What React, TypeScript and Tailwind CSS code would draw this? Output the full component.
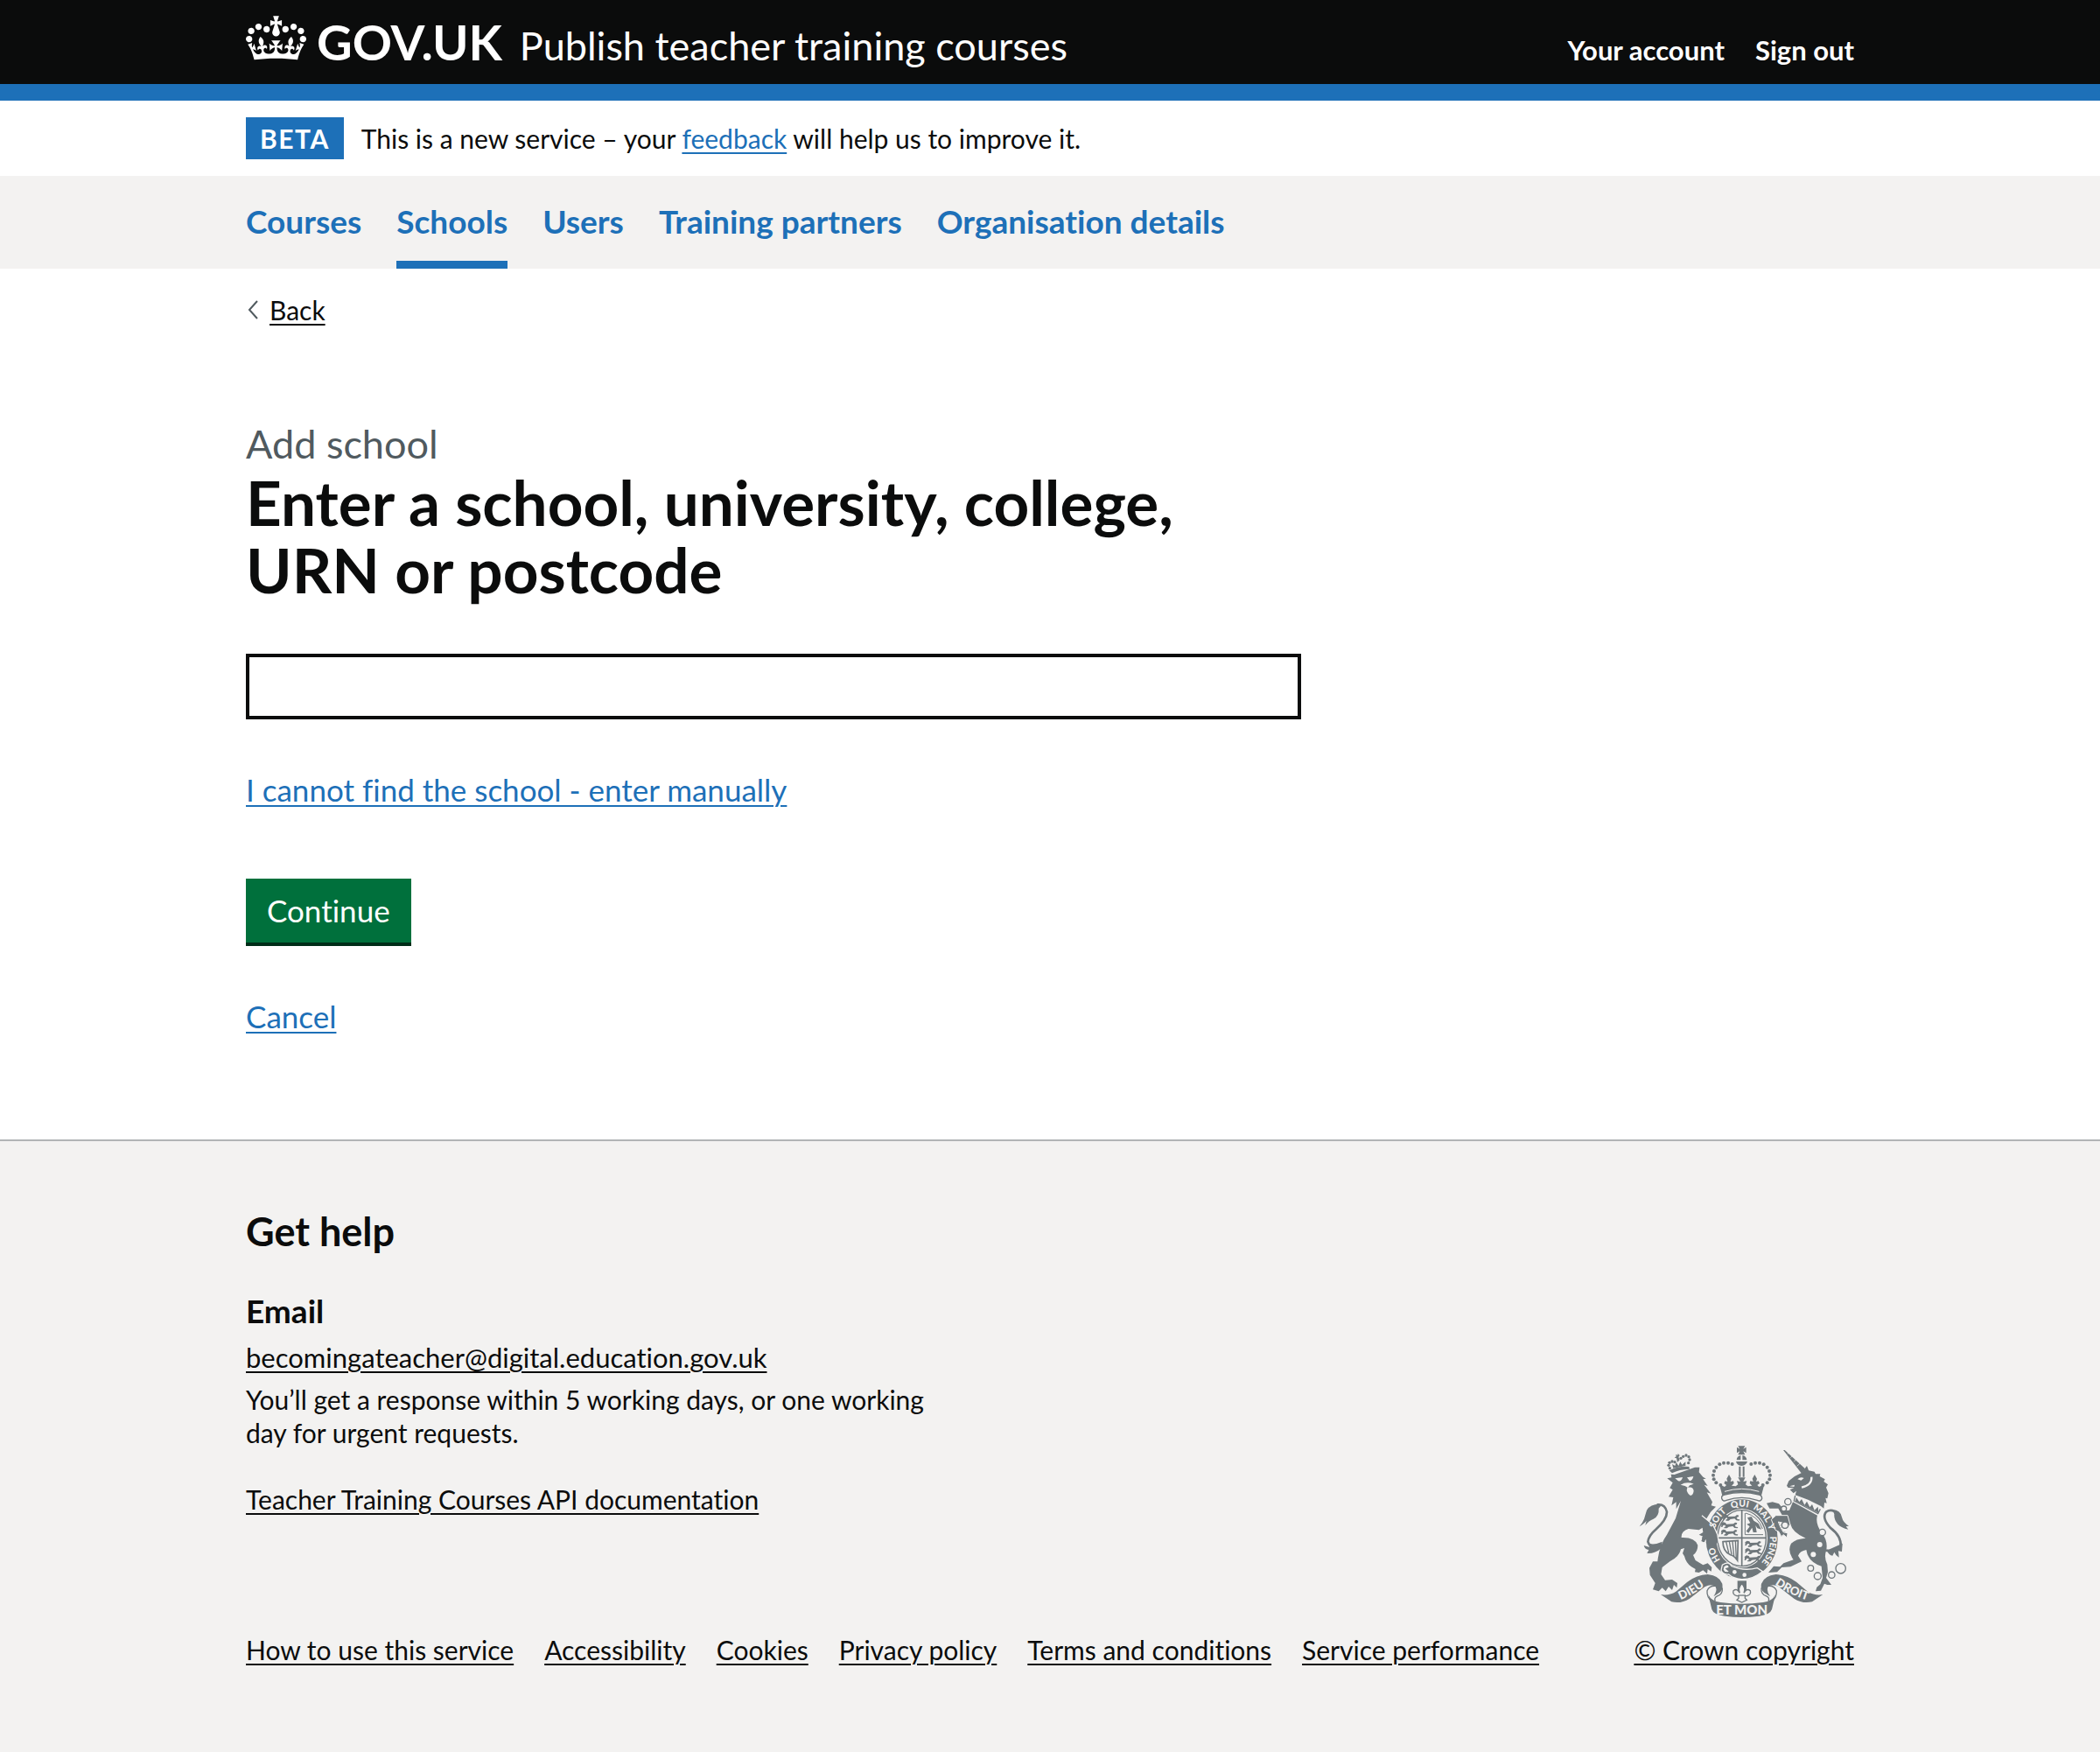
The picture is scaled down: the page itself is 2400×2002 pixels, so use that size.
import type { ReactNode } from "react";

const container = "mx-auto w-full max-w-[1838px]";
const link =
  "underline decoration-2 underline-offset-4 [font-variant-ligatures:no-common-ligatures]";

const navItems = [
  { label: "Courses", current: false },
  { label: "Schools", current: true },
  { label: "Users", current: false },
  { label: "Training partners", current: false },
  { label: "Organisation details", current: false },
];

const footerLinks = [
  "How to use this service",
  "Accessibility",
  "Cookies",
  "Privacy policy",
  "Terms and conditions",
  "Service performance",
];

function Crown() {
  return (
    <svg viewBox="0 0 132 97" className="-mb-1 h-[51px] w-[69px] shrink-0" fill="currentColor" aria-hidden="true">
      <path d="M25 30.2c3.5 1.5 7.7-.2 9.1-3.7 1.5-3.6-.2-7.8-3.9-9.2-3.6-1.4-7.6.3-9.1 3.9-1.4 3.5.3 7.5 3.9 9zM9 39.5c3.6 1.5 7.8-.2 9.2-3.7 1.5-3.6-.2-7.8-3.9-9.1-3.6-1.5-7.6.2-9.1 3.8-1.4 3.5.3 7.5 3.8 9zM4.4 57.2c3.5 1.5 7.7-.2 9.1-3.8 1.5-3.6-.2-7.7-3.9-9.1-3.5-1.5-7.6.3-9.1 3.8-1.4 3.5.3 7.6 3.9 9.1zm38.3-21.4c3.5 1.5 7.7-.2 9.1-3.8 1.5-3.6-.2-7.7-3.9-9.1-3.6-1.5-7.6.3-9.1 3.8-1.3 3.6.4 7.7 3.9 9.1zm64.4-5.6c-3.6 1.5-7.8-.2-9.1-3.7-1.5-3.6.2-7.8 3.8-9.2 3.6-1.4 7.7.3 9.2 3.9 1.3 3.5-.4 7.5-3.9 9zm15.9 9.3c-3.6 1.5-7.7-.2-9.1-3.7-1.5-3.6.2-7.8 3.7-9.1 3.6-1.5 7.7.2 9.2 3.8 1.5 3.5-.3 7.5-3.8 9zm4.7 17.7c-3.6 1.5-7.8-.2-9.2-3.8-1.5-3.6.2-7.7 3.9-9.1 3.6-1.5 7.7.3 9.2 3.8 1.3 3.5-.4 7.6-3.9 9.1zM89.3 35.8c-3.6 1.5-7.8-.2-9.2-3.8-1.4-3.6.2-7.7 3.9-9.1 3.6-1.5 7.7.3 9.2 3.8 1.4 3.6-.3 7.7-3.9 9.1zM69.7 17.7l8.9 4.7V9.3l-8.9 2.8c-.2-.3-.5-.6-.9-.9L72.4 0H59.6l3.5 11.2c-.3.3-.6.5-.9.9l-8.8-2.8v13.1l8.8-4.7c.3.3.6.7.9.9l-5 15.4v.1c-.2.8-.4 1.6-.4 2.4 0 4.1 3.1 7.5 7 8.1h.2c.3 0 .7.1 1 .1.4 0 .7 0 1-.1h.2c4-.6 7.1-4.1 7.1-8.1 0-.8-.1-1.7-.4-2.4V34l-5.1-15.4c.4-.2.7-.6 1-.9zM66 92.8c16.9 0 32.8 1.1 47.1 3.2 4-16.9 8.9-26.7 14-33.5l-9.6-3.4c1 4.9 1.1 7.2 0 10.2-1.5-1.4-3-4.3-4.2-8.7L108.6 76c2.8-2 5-3.2 7.5-3.3-4.4 9.4-10 11.9-13.6 11.2-4.3-.8-6.3-4.6-5.6-7.9 1-4.7 5.7-5.9 8-.5 4.3-8.7-3-11.4-7.6-8.8 7.1-7.2 7.9-13.5 2.1-21.1-8 6.1-8.1 12.3-4.5 20.8-4.7-5.4-12.1-2.5-9.5 6.2 3.4-5.2 7.9-2 7.2 3.1-.6 4.3-6.4 7.8-13.5 7.2-10.3-.9-10.9-8-11.2-13.8 2.5-.5 7.1 1.8 11 7.3L80.2 60c-4.1 4.4-8 5.3-12.3 5.4 1.4-4.4 8-11.6 8-11.6H55.5s6.4 7.2 7.9 11.6c-4.2-.1-8-1-12.3-5.4l1.4 16.4c3.9-5.5 8.5-7.7 10.9-7.3-.3 5.8-.9 12.8-11.1 13.8-7.2.6-12.9-2.9-13.5-7.2-.7-5 3.8-8.3 7.1-3.1 2.7-8.7-4.6-11.6-9.4-6.2 3.7-8.5 3.6-14.7-4.6-20.8-5.8 7.6-5 13.9 2.2 21.1-4.7-2.6-11.9.1-7.7 8.8 2.3-5.5 7.1-4.2 8.1.5.7 3.3-1.3 7.1-5.7 7.9-3.5.7-9-1.8-13.5-11.2 2.5.1 4.7 1.3 7.5 3.3l-4.7-15.4c-1.2 4.4-2.7 7.2-4.3 8.7-1.1-3-.9-5.3 0-10.2l-9.5 3.4c5 6.9 9.9 16.7 14 33.5 14.8-2.1 30.8-3.2 47.7-3.2z" />
    </svg>
  );
}

const INK = "#6f777b";
const PAPER = "#f3f2f1";

/* One walking lion of the quartered shield, 64 units wide. */
function ShieldLion({ x, y }: { x: number; y: number }) {
  return (
    <path
      transform={`translate(${x} ${y})`}
      d="M2 6l7-5 8 2 3 5 24-1 6-5 7 2-2 5-6 2 3 6 8 1-2 4-10-1-6-6-14 2-6 5-10 0 1-4 5-2-3-5-6 1-2 5-5 1 1-7z"
      fill={INK}
    />
  );
}

/* One side of the scroll; the other is its mirror image. */
function Scroll() {
  return (
    <g>
      <path d="M145 579Q172 584 197 569L236 536Q268 512 306 510Q346 514 356 542Q361 566 340 577L326 586Q340 566 333 553Q318 541 296 553L244 593Q214 612 182 604Z" fill={INK} />
      <path d="M333 550Q312 548 304 566Q302 590 322 604M356 556Q358 578 340 584Q326 590 332 602" fill="none" stroke={INK} strokeWidth="4" />
    </g>
  );
}

function Crest() {
  const arch = [
    [350, 204], [335, 196], [327, 184], [325, 170], [328, 156], [335, 143], [347, 133], [361, 128], [376, 128], [390, 132],
  ];
  return (
    <svg viewBox="70 66 720 594" className="h-[198px] w-[240px]" role="img" aria-label="Royal coat of arms">
      {/* lion: tail, body, face and coronet */}
      <path d="M142 418Q106 420 101 398Q104 376 128 356Q166 322 166 296Q160 268 132 271" fill="none" stroke={INK} strokeWidth="8" />
      <path d="M150 270Q112 266 97 290Q92 306 88 320Q82 334 72 346Q90 334 96 326L92 342Q104 326 120 320Q140 310 138 284Z" fill={INK} />
      <path d="M150 398Q118 412 101 402L106 417L87 411Q90 424 104 426L98 438Q124 440 148 420Z" fill={INK} />
      <path
        d="M167 181L182 178L180 167L192 168L262 143L278 143L276 160L290 176L300 182L290 184L306 207L294 203L317 233L303 229L322 262L318 274L334 278L316 296L300 322L322 342L336 374L340 398L328 412L322 400L312 412L302 404L306 392L292 400L284 396L290 380L276 374L290 366L288 350L276 358L240 354Q214 362 216 384Q262 382 272 410Q272 432 256 444L264 462L290 478L306 472L320 486L318 500L306 492L304 508L290 496L276 504L262 502L264 492L250 484Q232 472 226 448L220 438L226 420L214 424Q208 450 176 466L150 486L146 510L160 530L184 528L202 540L200 556L190 546L184 564L172 552L162 568L150 556L138 568L118 562L126 540L108 512L106 488L118 466L134 466Q140 410 166 374L196 318L214 258L198 286L198 262L182 274L188 246L172 244L186 220L176 214L186 196Z"
        fill={INK}
      />
      <path d="M194 181L220 177Q216 193 205 190ZM235 178L257 174Q254 189 244 190ZM213 203Q234 190 258 200L244 205L238 213L228 207ZM236 213Q256 208 258 224Q256 238 247 240Q238 236 234 222Z" fill={PAPER} />
      <path d="M174 154Q206 138 242 141L244 149Q208 150 184 163Z" fill={INK} />
      <path d="M188 146L184 132L194 138L198 126L206 138L212 124L218 134L230 124L230 138Z" fill={INK} />
      {[[176, 146], [172, 136], [175, 127], [184, 123], [193, 125], [214, 112], [222, 106], [232, 102], [241, 107], [244, 117], [240, 128]].map(([x, y]) => (
        <circle key={`${x}-${y}`} cx={x} cy={y} r="5" fill={INK} />
      ))}
      <path d="M197 98L203 102L204 96L210 102L206 108L210 118L202 126L199 112L192 110L198 106Z" fill={INK} />

      {/* unicorn: horn, head, collar, body and tail */}
      <path d="M565 84L570 84L640 148L628 164Z" fill={INK} />
      <path d="M584 92L580 98M596 104L590 110M609 116L602 124M622 130L612 139" stroke={PAPER} strokeWidth="2" />
      <path
        d="M577 206L584 190L604 174L628 162L646 138L652 154L672 158L676 166L692 166L690 174L708 184L704 192L718 202L712 212L720 232L716 250L710 248L714 266L706 264L704 284L694 276L650 254L606 238L610 224L600 232L588 220L602 214L582 213Z"
        fill={INK}
      />
      <path d="M662 176Q664 204 628 212" fill="none" stroke={PAPER} strokeWidth="7" />
      <path d="M614 184Q624 174 636 180L626 188ZM586 208L604 203L602 210Z" fill={PAPER} />
      <path d="M606 240L602 258L684 302L692 286" fill={PAPER} stroke={INK} strokeWidth="4" />
      <path d="M606 259L610 246L620 262L628 252L638 272L646 260L656 280L664 270L672 290L684 278L686 300Z" fill={INK} />
      <path
        d="M598 262L682 308Q674 334 696 366Q720 396 712 430Q704 452 716 476L718 502L712 522L730 546L716 546L706 542L694 566L676 568L680 554L692 544L700 522L696 482Q650 468 644 426Q622 430 616 446L628 466L590 484L560 486L544 502L514 504L532 482L554 484L566 472L600 460Q578 430 592 404Q608 388 642 386Q596 366 590 338L566 328L548 326L554 342L564 362L580 368L578 384L566 374L558 380L552 364L540 358L528 322L540 312L574 310L562 308L548 284L518 284L508 266L528 262L550 268L570 292L586 290Z"
        fill={INK}
      />
      <path d="M712 428Q750 436 762 416Q766 380 726 350Q696 316 712 296Q734 282 752 306" fill="none" stroke={INK} strokeWidth="8" />
      <path d="M734 288Q762 290 766 314Q770 332 790 344L780 346L788 356Q764 350 752 338Q738 322 740 304Z" fill={INK} />
      <path d="M768 404L766 432L754 430L756 452Q744 444 740 434L734 446Q722 444 714 428Z" fill={INK} />
      {[[581, 261, 11], [567, 285, 9], [571, 341, 11], [699, 366, 11], [659, 489, 10], [683, 516, 12], [731, 512, 11], [762, 490, 17]].map(([x, y, r]) => (
        <circle key={`${x}-${y}`} cx={x} cy={y} r={r} fill={PAPER} stroke={INK} strokeWidth="4" />
      ))}
      <circle cx="690" cy="408" r="9" fill={PAPER} />
      <circle cx="668" cy="442" r="9" fill={PAPER} />

      {/* garter and quartered shield */}
      <ellipse cx="423" cy="389" rx="127" ry="140" fill={PAPER} />
      <ellipse cx="423" cy="389" rx="123" ry="136" fill={INK} />
      <ellipse cx="423" cy="386" rx="88" ry="101" fill={PAPER} />
      <ellipse cx="423" cy="386" rx="83" ry="96" fill={PAPER} stroke={INK} strokeWidth="4" />
      <path d="M423 290V482M340 385H506" stroke={INK} strokeWidth="5" />
      <ShieldLion x={356} y={304} />
      <ShieldLion x={350} y={330} />
      <ShieldLion x={350} y={355} />
      <ShieldLion x={432} y={394} />
      <ShieldLion x={432} y={419} />
      <ShieldLion x={430} y={444} />
      <path d="M434 300V374H496M436 300Q478 310 494 354" fill="none" stroke={INK} strokeWidth="3" />
      <path d="M442 316L456 312L464 326L480 336L490 356L476 352L470 342L474 366L462 366L458 350L446 368L438 362L450 346L440 338L452 334Z" fill={INK} />
      <path d="M358 398L410 394L408 462Q398 446 382 442Q358 430 358 398Z" fill="none" stroke={INK} strokeWidth="5" />
      <path d="M369 398L378 436M380 397L388 442M391 396L396 448M401 396L404 456" stroke={INK} strokeWidth="4" />
      <path d="M284 306L322 340L338 374L342 398L330 412L322 402L312 412L300 402L304 388L290 398L286 384L296 370L290 350Z" fill={INK} />
      <path d="M286 308L324 340L340 374L344 402" fill="none" stroke={PAPER} strokeWidth="4" />
      <path d="M590 344L566 334L548 330L556 350L566 366L580 368L578 384L566 374L558 380L550 364L538 358L524 322L540 308L580 308Z" fill={INK} stroke={PAPER} strokeWidth="3" />
      <circle cx="571" cy="341" r="11" fill={PAPER} stroke={INK} strokeWidth="4" />
      <path id="garter-line" d="M423 500A97 111 0 0 1 423 278A97 111 0 0 1 423 500" fill="none" />
      <g fontFamily="Lato, sans-serif" fontWeight="900" fontSize="31" fill={PAPER} textAnchor="middle">
        <text><textPath href="#garter-line" startOffset="17%">HO</textPath></text>
        <text><textPath href="#garter-line" startOffset="36%">SOIT</textPath></text>
        <text><textPath href="#garter-line" startOffset="49%">QUI</textPath></text>
        <text><textPath href="#garter-line" startOffset="61%">MAL</textPath></text>
        <text><textPath href="#garter-line" startOffset="69%">Y</textPath></text>
        <text><textPath href="#garter-line" startOffset="81%">PENSE</textPath></text>
      </g>
      <path d="M356 478Q378 462 388 482Q430 500 476 488L494 500Q460 528 422 527Q392 524 378 510Q358 512 352 496Z" fill={INK} stroke={PAPER} strokeWidth="4" />
      <path d="M362 484Q376 472 378 486L366 490L378 500Q366 506 360 494Z" fill={PAPER} />
      <circle cx="398" cy="502" r="7" fill={PAPER} />
      <circle cx="432" cy="512" r="7" fill={PAPER} />

      {/* royal crown */}
      <path d="M410 70H434L428 80L438 74V94L428 88L434 100H410L416 88L406 94V74L416 80Z" fill={INK} />
      <path d="M405 118A18 18 0 0 1 419 102V118ZM425 102A18 18 0 0 1 440 118H425ZM403 123H442Q438 136 422 138Q406 136 403 123Z" fill={INK} />
      <path d="M416 140V176M429 140V176" stroke={INK} strokeWidth="6" />
      {arch.map(([x, y]) => (
        <g key={`${x}-${y}`} fill={INK}>
          <circle cx={x} cy={y} r="6" />
          <circle cx={845 - x} cy={y} r="6" />
        </g>
      ))}
      <path
        d="M346 202L364 210L370 204L362 198L366 190L374 192L371 182L379 168L387 182L384 192L394 190L396 198L388 206L402 208L410 202L406 190L418 192L410 178H435L428 192L440 190L436 202L444 208L458 206L450 198L452 190L462 192L459 182L467 168L475 182L472 192L480 190L484 198L476 204L482 210L500 202L490 240Q422 218 356 240Z"
        fill={INK}
      />
      <path d="M364 226Q422 208 482 226" fill="none" stroke={PAPER} strokeWidth="3" />
      <path d="M354 250Q352 240 364 237Q422 222 482 237Q492 240 492 250Q488 262 476 256Q422 238 370 256Q358 262 354 250Z" fill={PAPER} stroke={INK} strokeWidth="4" />

      {/* pendant lily */}
      <path d="M408 532H439V566H408Z" fill={INK} />
      <path
        d="M423 542Q438 558 430 574Q440 556 452 566Q456 580 440 584H434V592L440 598L423 606L406 598L412 592V584H406Q390 580 394 566Q406 556 416 574Q408 558 423 542Z"
        fill={PAPER}
        stroke={INK}
        strokeWidth="4"
      />
      <path d="M410 582H436" stroke={INK} strokeWidth="4" />

      {/* motto scroll */}
      <Scroll />
      <g transform="translate(846 0) scale(-1 1)">
        <Scroll />
      </g>
      <path d="M308 580Q318 602 350 606Q423 616 496 606Q528 602 538 580L526 630Q520 648 482 653Q423 661 364 653Q326 648 320 630Z" fill={INK} />
      <path id="scroll-left" d="M204 601Q250 584 304 544" fill="none" />
      <path id="scroll-right" d="M530 540Q588 582 654 601" fill="none" />
      <g fontFamily="Lato, sans-serif" fontWeight="900" fill={PAPER} textAnchor="middle">
        <text fontSize="40"><textPath href="#scroll-left" startOffset="50%">DIEU</textPath></text>
        <text fontSize="40"><textPath href="#scroll-right" startOffset="50%">DROIT</textPath></text>
        <text x="423" y="647" fontSize="45">ET MON</text>
      </g>
    </svg>
  );
}

function FooterLink({ children }: { children: ReactNode }) {
  return (
    <a href="#" className={link}>
      {children}
    </a>
  );
}

export default function App() {
  return (
    <div className="min-h-screen bg-[#f3f2f1] font-['Lato',sans-serif] text-[30px] leading-[38px] text-[#0b0c0c]">
      <div className="bg-white">
        <header className="border-b-[19px] border-[#1d70b8] bg-[#0b0c0c] text-white">
          <div className={`${container} flex min-h-[96px] items-baseline justify-between pt-[18px]`}>
            <div className="flex items-baseline gap-5">
              <a href="#" className="flex items-baseline gap-3 text-[56px] leading-[56px] font-bold">
                <Crown />
                GOV.UK
              </a>
              <a href="#" className="text-[45px] leading-[56px]">
                Publish teacher training courses
              </a>
            </div>
            <nav aria-label="Account" className="flex gap-[35px] text-[31px] font-bold">
              <a href="#">Your account</a>
              <a href="#">Sign out</a>
            </nav>
          </div>
        </header>

        <div className={`${container} flex items-center gap-5 py-[19px]`}>
          <strong className="bg-[#1d70b8] px-4 leading-[48px] tracking-wider text-white">BETA</strong>
          <p>
            This is a new service – your{" "}
            <a href="#" className={`${link} text-[#1d70b8]`}>
              feedback
            </a>{" "}
            will help us to improve it.
          </p>
        </div>

        <nav aria-label="Primary" className="bg-[#f3f2f1]">
          <ul className={`${container} flex gap-10 text-[37px] leading-[46px] font-bold text-[#1d70b8] [font-variant-ligatures:no-common-ligatures]`}>
            {navItems.map((item) => (
              <li key={item.label}>
                <a
                  href="#"
                  aria-current={item.current ? "page" : undefined}
                  className={
                    item.current
                      ? "block border-b-[9px] border-[#1d70b8] pt-[29px] pb-[22px]"
                      : "block border-b-[9px] border-transparent pt-[29px] pb-[22px]"
                  }
                >
                  {item.label}
                </a>
              </li>
            ))}
          </ul>
        </nav>

        <div className={`${container} pt-[28px] pb-[117px]`}>
          <a href="#" className="inline-flex items-center gap-[11px] align-top">
            <svg viewBox="0 0 16 24" className="h-6 w-4" fill="none" stroke="#505a5f" strokeWidth="2" aria-hidden="true">
              <path d="M13 2L4 12L13 22" />
            </svg>
            <span className={link}>Back</span>
          </a>

          <main className="mt-[106px] max-w-[1206px]">
            <form onSubmit={(e) => e.preventDefault()}>
              <h1>
                <span className="block text-[45px] leading-[56px] text-[#505a5f]">Add school</span>
                <label htmlFor="school" className="block text-[71px] leading-[77px] font-bold">
                  Enter a school, university, college, URN or postcode
                </label>
              </h1>
              <input
                id="school"
                type="text"
                className="mt-[58px] block h-[75px] w-full border-4 border-[#0b0c0c] bg-white px-2 text-[35px] outline-none"
              />
              <p className="mt-14 text-[35px] leading-[48px] text-[#1d70b8]">
                <a href="#" className={link}>
                  I cannot find the school - enter manually
                </a>
              </p>
              <button
                type="submit"
                className="mt-[78px] block border-b-4 border-[#002d18] bg-[#00703c] px-6 text-[35px] leading-[73px] text-white [font-variant-ligatures:no-common-ligatures]"
              >
                Continue
              </button>
              <p className="mt-14 text-[35px] leading-[48px] text-[#1d70b8]">
                <a href="#" className={link}>
                  Cancel
                </a>
              </p>
            </form>
          </main>
        </div>
      </div>

      <footer className="border-t-2 border-[#b1b4b6] pt-[74px] pb-[97px]">
        <div className={`${container} flex items-end justify-between`}>
          <div>
            <h2 className="text-[45px] leading-[58px] font-bold">Get help</h2>
            <h3 className="mt-[38px] text-[37px] leading-[48px] font-bold">Email</h3>
            <p className="mt-[10px] text-[31px]">
              <FooterLink>becomingateacher@digital.education.gov.uk</FooterLink>
            </p>
            <p className="mt-[10px] max-w-[800px]">
              You’ll get a response within 5 working days, or one working day for urgent requests.
            </p>
            <p className="mt-[38px]">
              <FooterLink>Teacher Training Courses API documentation</FooterLink>
            </p>
            <ul className="mt-[134px] flex gap-[35px]">
              {footerLinks.map((label) => (
                <li key={label}>
                  <FooterLink>{label}</FooterLink>
                </li>
              ))}
            </ul>
          </div>
          <div className="flex flex-col items-center gap-[17px]">
            <Crest />
            <FooterLink>© Crown copyright</FooterLink>
          </div>
        </div>
      </footer>
    </div>
  );
}
